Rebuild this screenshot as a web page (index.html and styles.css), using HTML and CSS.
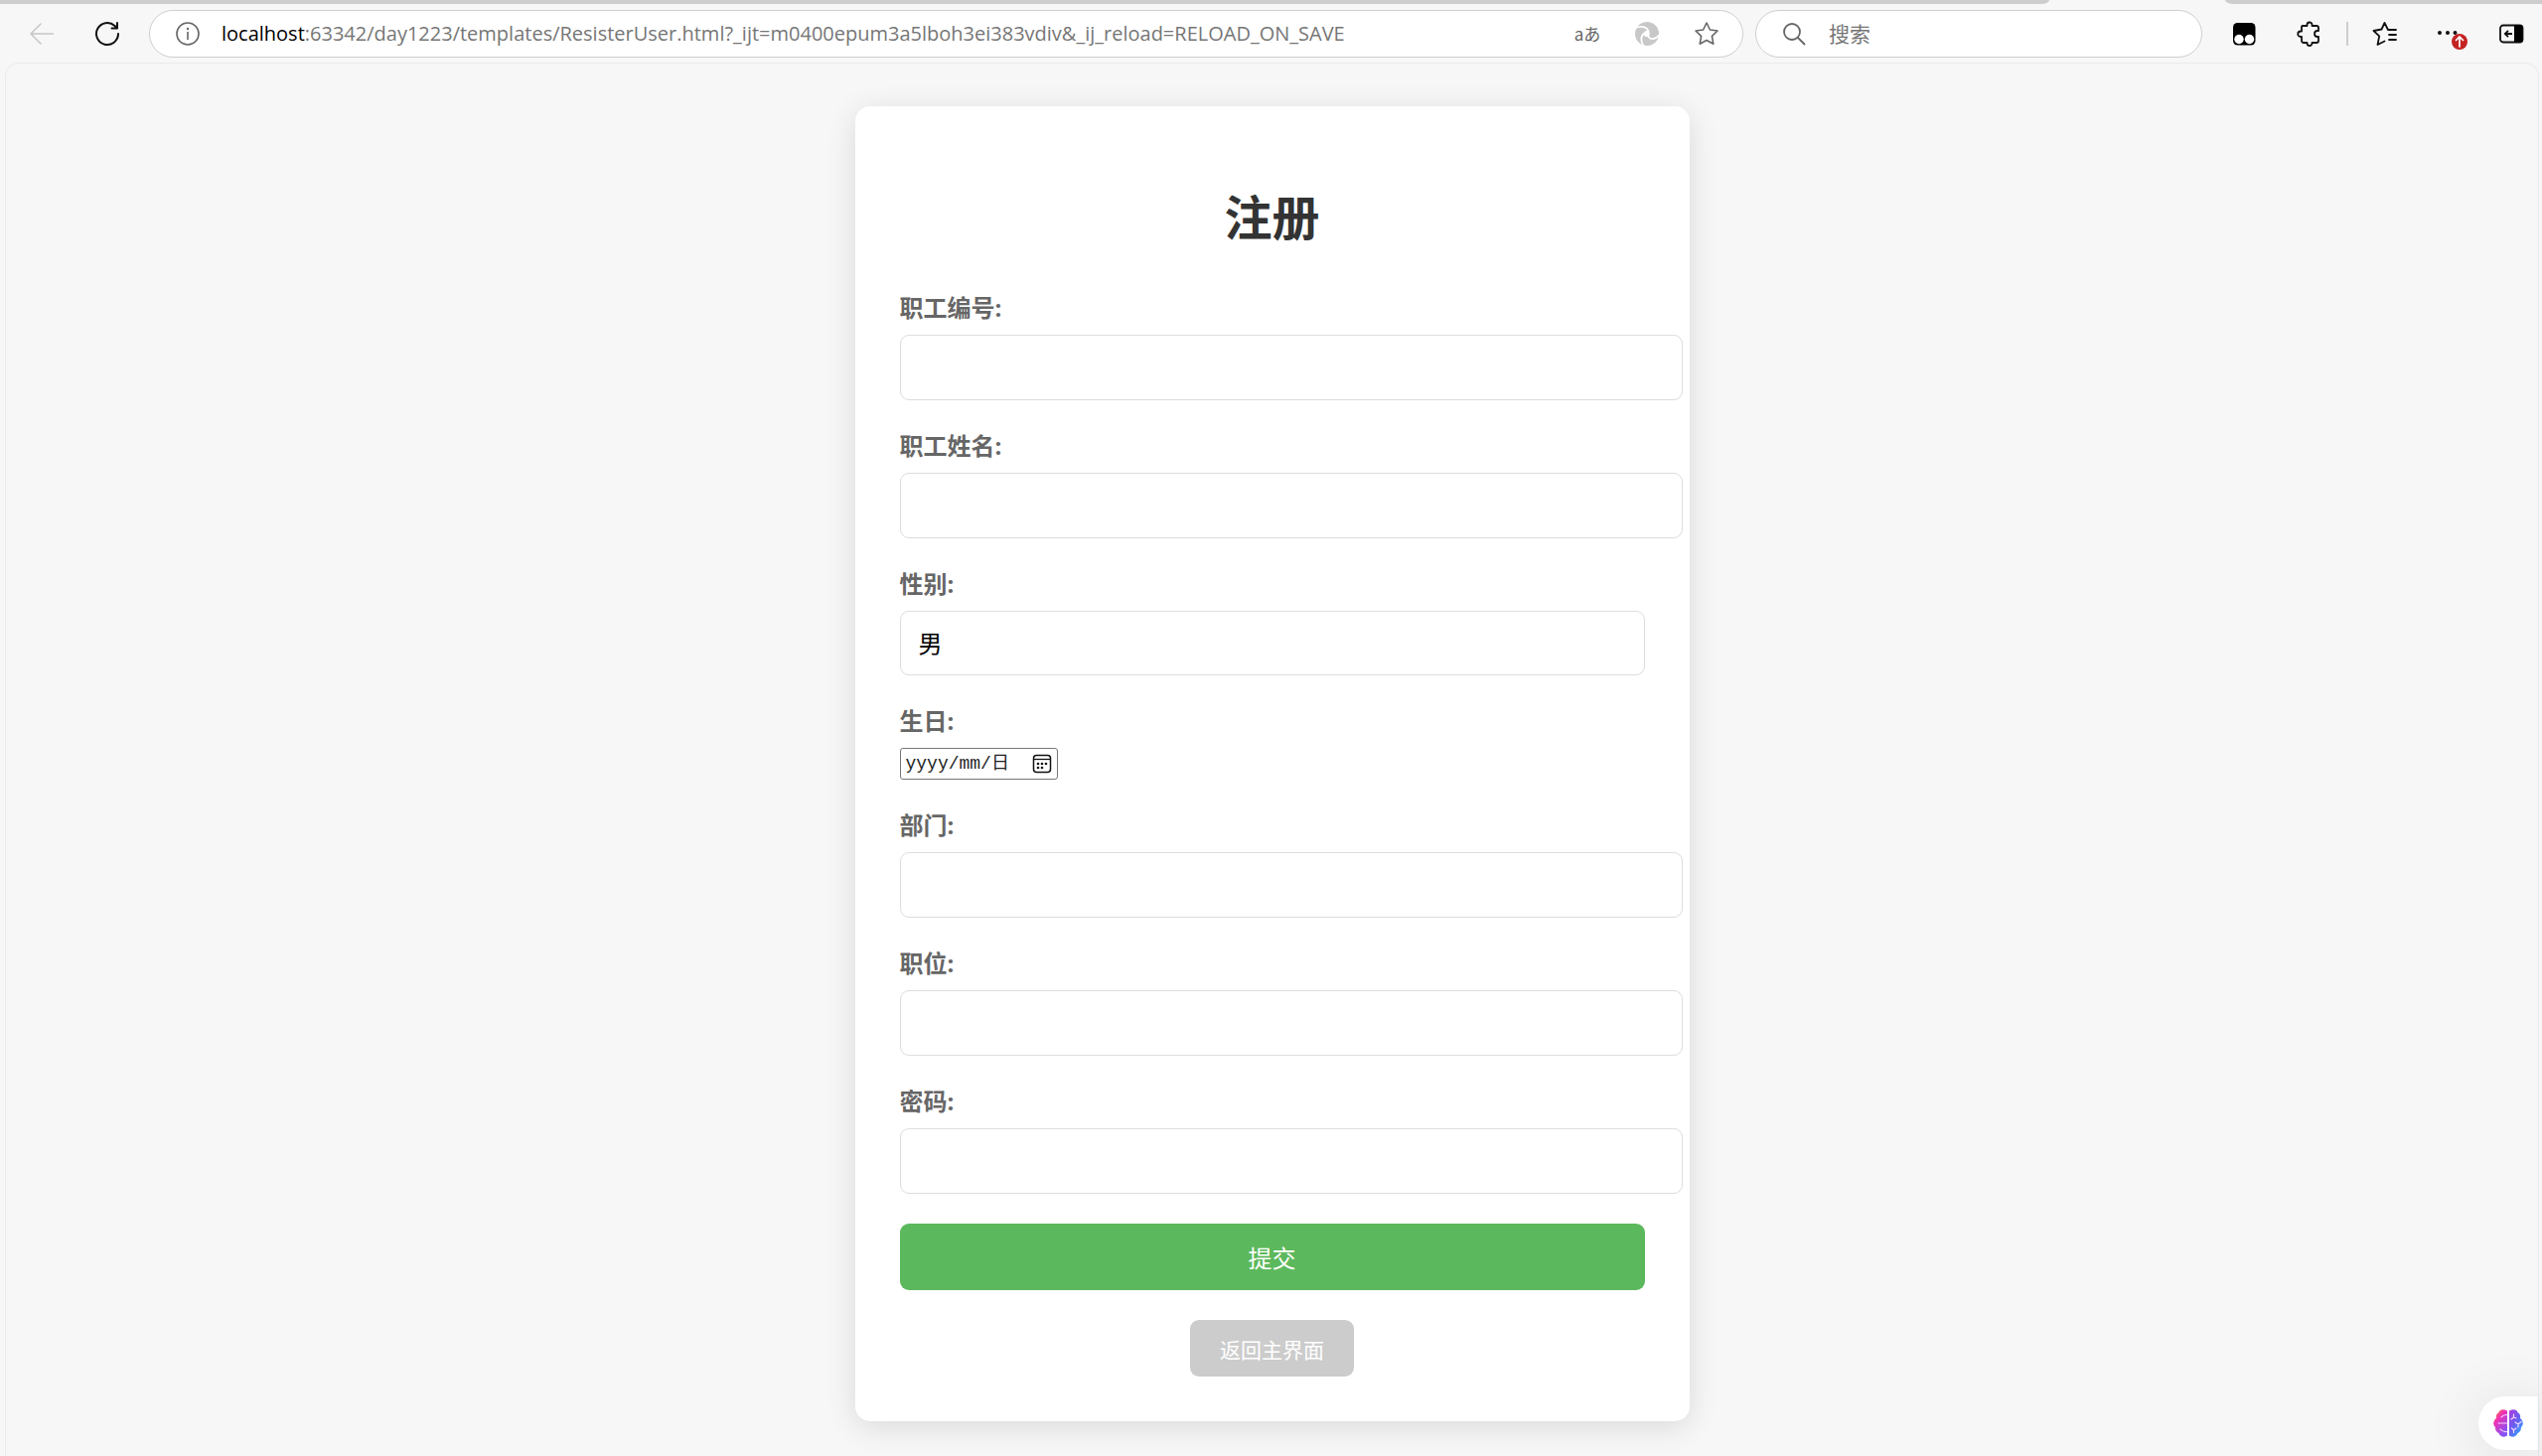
FILE: index.html
```
<!DOCTYPE html>
<html lang="zh-CN">
<head>
  <meta charset="UTF-8">
  <meta name="viewport" content="width=device-width, initial-scale=1.0">
  <title>注册</title>
  <link rel="stylesheet" href="styles.css">
</head>
<body>
<header class="browser">
  <div class="tabs">
    <div class="tabs-left"></div>
    <div class="tabs-right"></div>
  </div>
  <div class="toolbar">
    <button class="icon-btn" aria-label="后退">
      <svg width="26" height="26" viewBox="0 0 26 26" fill="none" stroke="#c6c6c6" stroke-width="1.5" stroke-linecap="round" stroke-linejoin="round"><path d="M24.500 13H2M12 3 2 13l10 10"/></svg>
    </button>
    <button class="icon-btn reload" aria-label="刷新">
      <svg width="26" height="26" viewBox="0 0 26 26" fill="none" stroke="#111" stroke-width="2" stroke-linecap="round" stroke-linejoin="round"><path d="M24 13a11 11 0 1 1-3.500-8L23 7.500M23 2v5.500h-5.500"/></svg>
    </button>
    <div class="address">
      <button class="icon-btn" aria-label="站点信息">
        <svg width="26" height="26" viewBox="0 0 26 26" fill="none" stroke="#666" stroke-width="1.600"><circle cx="13" cy="13" r="11"/><path d="M13 11.500v7" stroke-linecap="round"/><circle cx="13" cy="8" r="1.200" fill="#666" stroke="none"/></svg>
      </button>
      <label class="host" for="url">localhost</label>
      <input class="url" id="url" type="text" value=":63342/day1223/templates/ResisterUser.html?_ijt=m0400epum3a5lboh3ei383vdiv&amp;_ij_reload=RELOAD_ON_SAVE">
      <button class="icon-btn translate" aria-label="翻译">aあ</button>
      <button class="icon-btn" aria-label="助手">
        <svg width="26" height="26" viewBox="0 0 26 26"><circle cx="13" cy="13" r="12" fill="#c8c8c8"/><g fill="none" stroke="#fff" stroke-width="1.800" stroke-linecap="round"><path d="M.5 7.500C7 4.500 13 6 14.500 10.500"/><path d="M25 14.500C21 19.500 15.500 19 14 15"/><path d="M9.500 25C6 20 7 14.500 10.500 12.500"/></g><circle cx="12.800" cy="13" r="3" fill="#fff"/></svg>
      </button>
      <button class="icon-btn" aria-label="收藏此页">
        <svg width="26" height="26" viewBox="0 0 26 26" fill="none" stroke="#666" stroke-width="1.600" stroke-linejoin="round"><path d="m13 2 3.400 7 7.600 1-5.600 5.400 1.400 7.800L13 19.500l-6.800 3.700 1.400-7.800L2 10l7.600-1z"/></svg>
      </button>
    </div>
    <div class="search">
      <svg width="26" height="26" viewBox="0 0 26 26" fill="none" stroke="#666" stroke-width="1.800" stroke-linecap="round"><circle cx="11" cy="11" r="8"/><path d="m17 17 6.500 6.500"/></svg>
      <input class="search-input" type="text" placeholder="搜索" aria-label="搜索">
    </div>
    <div class="tools">
      <button class="icon-btn" aria-label="脚本">
        <svg width="26" height="26" viewBox="0 0 26 26"><rect x="2" y="2" width="22.500" height="22.500" rx="4.500" fill="#000"/><circle cx="8" cy="18.500" r="4.700" fill="#fff"/><circle cx="18.500" cy="18.500" r="4.700" fill="#fff"/></svg>
      </button>
      <button class="icon-btn" aria-label="扩展">
        <svg width="26" height="26" viewBox="0 0 26 26" fill="none" stroke="#111" stroke-width="1.800" stroke-linejoin="round"><path d="M6 5h4.500V4a2.500 2.500 0 0 1 5 0v1H20a2 2 0 0 1 2 2v3h-1a3 3 0 0 0 0 6h1v4a2 2 0 0 1-2 2h-4.500v.500a2.500 2.500 0 0 1-5 0V22H7a2 2 0 0 1-2-2v-4H4a2.700 2.700 0 0 1 0-5.500h1V6a1 1 0 0 1 1-1z"/></svg>
      </button>
      <span class="divider"></span>
      <button class="icon-btn" aria-label="收藏夹">
        <svg width="26" height="26" viewBox="0 0 26 26" fill="none" stroke="#111" stroke-width="1.800" stroke-linecap="round" stroke-linejoin="round"><path d="M24 9h-8l-3.500-7L9.500 8.500 1.500 10l5.700 5.300L5.500 24l7-3.500M17 14h7M17 19h7"/></svg>
      </button>
      <button class="icon-btn more" aria-label="设置及其他">
        <svg width="34" height="34" viewBox="0 0 34 34"><g fill="#111"><circle cx="6" cy="16" r="2"/><circle cx="14" cy="16" r="2"/><circle cx="21.500" cy="16" r="2"/></g><circle cx="26" cy="25" r="8" fill="#c42323"/><path d="M26 30v-9.500M22.500 23.500 26 20l3.500 3.500" fill="none" stroke="#fff" stroke-width="1.700" stroke-linecap="round"/></svg>
      </button>
      <button class="icon-btn" aria-label="边栏">
        <svg width="26" height="26" viewBox="0 0 26 26"><rect x="2" y="4.500" width="22.500" height="17" rx="3" fill="none" stroke="#111" stroke-width="1.800"/><path d="M16 4h6a2 2 0 0 1 2 2v13.500a2 2 0 0 1-2 2h-6z"/><path d="M14 13H7M10 9.800 6.800 13l3.200 3.200" fill="none" stroke="#111" stroke-width="1.800"/></svg>
      </button>
    </div>
  </div>
</header>

<main class="page">
  <form class="container">
    <h1>注册</h1>
    <div class="form-group">
      <label for="empId">职工编号:</label>
      <input class="field" type="text" id="empId" name="empId">
    </div>
    <div class="form-group">
      <label for="empName">职工姓名:</label>
      <input class="field" type="text" id="empName" name="empName">
    </div>
    <div class="form-group">
      <label for="gender">性别:</label>
      <select id="gender" name="gender">
        <option value="男">男</option>
        <option value="女">女</option>
      </select>
    </div>
    <div class="form-group">
      <label for="birthday">生日:</label>
      <div class="date">
        <input type="date" id="birthday" name="birthday">
        <div class="date-face">
          <span>yyyy/mm/日</span>
          <svg width="20" height="20" viewBox="0 0 20 20"><rect x="1.500" y="1.500" width="17" height="17" rx="3" fill="none" stroke="#111" stroke-width="1.500"/><path d="M2 5.500h16" stroke="#111" stroke-width="1.300"/><g fill="#111"><circle cx="6" cy="10" r="1.300"/><circle cx="10" cy="10" r="1.300"/><circle cx="14" cy="10" r="1.300"/><circle cx="6" cy="14" r="1.300"/><circle cx="10" cy="14" r="1.300"/></g></svg>
        </div>
      </div>
    </div>
    <div class="form-group">
      <label for="dept">部门:</label>
      <input class="field" type="text" id="dept" name="dept">
    </div>
    <div class="form-group">
      <label for="position">职位:</label>
      <input class="field" type="text" id="position" name="position">
    </div>
    <div class="form-group">
      <label for="password">密码:</label>
      <input class="field" type="password" id="password" name="password">
    </div>
    <button class="submit" type="submit">提交</button>
    <button class="back" type="button">返回主界面</button>
  </form>
</main>

<button class="assistant" aria-label="AI 助手">
  <svg width="30" height="28" viewBox="0 0 30 28">
    <defs>
      <linearGradient id="brainLeft" x1="0" y1="0" x2=".6" y2="1"><stop offset="0" stop-color="#ff9a2e"/><stop offset=".4" stop-color="#f02fb4"/><stop offset="1" stop-color="#8455f5"/></linearGradient>
      <linearGradient id="brainRight" x1="0" y1="0" x2=".8" y2="1"><stop offset="0" stop-color="#b13be0"/><stop offset=".5" stop-color="#6a5cf0"/><stop offset="1" stop-color="#2fa8ff"/></linearGradient>
    </defs>
    <path d="M14 1.500C10-.5 6.500 0 5.500 3 3 4.500 2.500 7 3 9-.5 11.500-.5 16 2 18c0 3 1 5 3.500 6 1.500 4 6 4.500 8.500 2.500z" fill="url(#brainLeft)"/>
    <path d="M16 1.500c4-2 7.500-1.500 8.500 1.500 2.500 1.500 3 4 2.500 6 3.500 2.500 3.500 7 1 9 0 3-1 5-3.500 6-1.500 4-6 4.500-8.500 2.500z" fill="url(#brainRight)"/>
    <path d="M5 14h9M8 8c1.500-2 3.500-2.500 6-2.500M7 20c2 2.500 4 3 7 2.500M20.500 5v3l-2.500 2M20.500 8l2.500 1M22 13l3 2 3-2.500M25 15v3M18.500 19l2 2 2.500-2M20.500 21v2.500" fill="none" stroke="#f3d4ff" stroke-width="1.200" stroke-linecap="round"/>
  </svg>
</button>
</body>
</html>
```
FILE: styles.css
```
* {
  box-sizing: border-box;
}
body {
  margin: 0;
  min-height: 100vh;
  display: flex;
  flex-direction: column;
  background-color: #f7f7f7;
  font-family: "Open Sans", "Noto Sans CJK SC", sans-serif;
}
button, input, select {
  font-family: inherit;
}

/* browser bar */
.tabs {
  display: flex;
  justify-content: space-between;
  gap: 177px;
  height: 4px;
}
.tabs-left {
  flex: 1;
  background-color: #cdcdcd;
  border-bottom-right-radius: 8px 4px;
}
.tabs-right {
  width: 319px;
  background-color: #cdcdcd;
  border-bottom-left-radius: 8px 4px;
}
.toolbar {
  display: flex;
  align-items: center;
  height: 59px;
  padding: 0 18px 0 29px;
}
.icon-btn {
  display: flex;
  align-items: center;
  justify-content: center;
  flex: none;
  width: 26px;
  height: 26px;
  padding: 0;
  border: none;
  background: none;
  cursor: pointer;
}
.reload {
  margin: 0 29px 0 40px;
}
.address, .search {
  display: flex;
  align-items: center;
  height: 48px;
  border: 1px solid #cfcfcf;
  border-radius: 24px;
  background-color: #fff;
}
.address {
  flex: 1;
  min-width: 0;
  gap: 34px;
  padding: 0 23px 0 25px;
}
.host, .url {
  font-size: 20px;
  line-height: 28px;
}
.host {
  margin-left: -13px;
  color: #000;
}
.url {
  flex: 1;
  min-width: 0;
  margin-left: -34px;
  padding: 0;
  border: none;
  outline: none;
  background: none;
  color: #767676;
}
.translate {
  font-family: "Noto Sans CJK JP", sans-serif;
  font-size: 17px;
  line-height: 24px;
  white-space: nowrap;
  color: #666;
}
.search {
  width: 450px;
  margin-left: 12px;
  padding: 0 25px;
  gap: 22px;
}
.search-input {
  flex: 1;
  min-width: 0;
  padding: 0;
  border: none;
  outline: none;
  font-size: 21px;
}
.search-input::placeholder {
  color: #767676;
}
.tools {
  display: flex;
  align-items: center;
  gap: 40px;
  margin-left: 29px;
}
.divider {
  width: 2px;
  height: 24px;
  margin: 0 -16px;
  background-color: #cdcdcd;
}
.more {
  width: 34px;
  height: 34px;
  margin: 0 -9px 0 -4px;
}

/* page */
.page {
  flex: 1;
  margin: 0 3px 0 5px;
  padding: 43px 0 34px;
  border: 1px solid #ebebeb;
  border-bottom: none;
  border-radius: 14px 14px 0 0;
}
.container {
  max-width: 840px;
  margin: 0 auto;
  padding: 45px;
  border-radius: 15px;
  background-color: #fff;
  box-shadow: 0 6px 30px rgba(0, 0, 0, 0.12);
}
h1 {
  margin: 36px 0 44px;
  font-size: 48px;
  line-height: 62px;
  text-align: center;
  color: #333;
}
.form-group {
  margin-bottom: 30px;
}
.form-group label {
  display: block;
  margin-bottom: 12px;
  font-size: 24px;
  line-height: 31px;
  font-weight: bold;
  color: #666;
}
.field, select {
  display: block;
  width: 100%;
  padding: 0 18px;
  border: 1px solid #ddd;
  border-radius: 9px;
  background-color: #fff;
  font-size: 24px;
  color: #000;
}
.field {
  box-sizing: content-box;
  height: 64px;
}
select {
  height: 65px;
  appearance: none;
}
.date {
  position: relative;
  width: 159px;
  height: 32px;
}
.date input {
  display: block;
  width: 100%;
  height: 100%;
  padding: 0 5px;
  border: 1px solid #767676;
  border-radius: 3px;
  background-color: #fff;
}
.date input::-webkit-datetime-edit,
.date input::-webkit-calendar-picker-indicator {
  opacity: 0;
}
.date-face {
  position: absolute;
  inset: 0;
  display: flex;
  align-items: center;
  justify-content: space-between;
  padding: 0 6px;
  font-family: "Liberation Mono", "Noto Sans CJK SC", monospace;
  font-size: 18px;
  line-height: 26px;
  color: #222;
  pointer-events: none;
}
.submit, .back {
  display: block;
  border: none;
  border-radius: 9px;
  color: #fff;
  cursor: pointer;
}
.submit {
  width: 100%;
  height: 67px;
  background-color: #5cb85c;
  font-size: 24px;
}
.back {
  height: 57px;
  margin: 30px auto 0;
  padding: 0 30px;
  background-color: #ccc;
  font-size: 21px;
}

/* floating assistant */
.assistant {
  position: fixed;
  right: 4px;
  bottom: 6px;
  display: flex;
  align-items: center;
  width: 60px;
  height: 54px;
  padding: 0 15px;
  border: none;
  border-radius: 27px 0 0 27px;
  background-color: #fff;
  box-shadow: 0 6px 60px rgba(0, 0, 0, 0.12);
  cursor: pointer;
}
```
